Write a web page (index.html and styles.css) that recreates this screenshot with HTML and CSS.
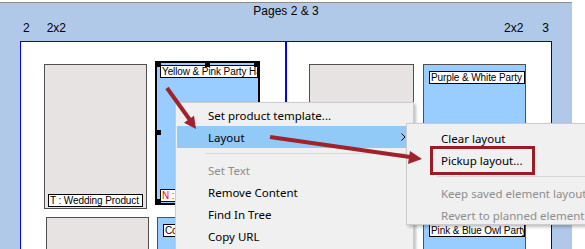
FILE: index.html
```html
<!DOCTYPE html>
<html>
<head>
    <title>Pages 2 &amp; 3</title>
    <link rel="stylesheet" href="styles.css">
</head>
<body>
    <div class="view">
        <div class="title">Pages 2 &amp; 3</div>
        <div class="info">
            <div class="info-side"><span>2</span><span>2x2</span></div>
            <div class="info-side info-side-right"><span>2x2</span><span>3</span></div>
        </div>
        <div class="spread">
            <div class="page page-left">
                <div class="row">
                    <div class="cell cell-empty">
                        <div class="tag">T : Wedding Product 1</div>
                    </div>
                    <div class="cell cell-filled cell-selected">
                        <div class="tag">Yellow &amp; Pink Party Hat</div>
                        <div class="tag tag-note">N : Note</div>
                        <span class="handle h-tl"></span>
                        <span class="handle h-tm"></span>
                        <span class="handle h-tr"></span>
                        <span class="handle h-ml"></span>
                        <span class="handle h-bl"></span>
                        <span class="handle h-bm"></span>
                        <span class="handle h-br"></span>
                    </div>
                </div>
                <div class="row row-shift">
                    <div class="cell cell-empty"></div>
                    <div class="cell cell-filled">
                        <div class="tag">Congratulations Banner</div>
                    </div>
                </div>
            </div>
            <div class="page page-right">
                <div class="row">
                    <div class="cell cell-empty cell-wide"></div>
                    <div class="cell cell-filled cell-narrow">
                        <div class="tag">Purple &amp; White Party Hat</div>
                    </div>
                </div>
                <div class="row">
                    <div class="cell cell-empty cell-wide"></div>
                    <div class="cell cell-filled cell-narrow">
                        <div class="tag">Pink &amp; Blue Owl Party</div>
                    </div>
                </div>
            </div>
        </div>
    </div>

    <div class="menu">
        <div class="menu-item">Set product template...</div>
        <div class="menu-item active">
            <span>Layout</span>
            <svg class="chevron" width="5" height="8" viewBox="0 0 5 8"><polyline points="0.5,0.5 4,4 0.5,7.5" fill="none" stroke="#000" stroke-width="1"/></svg>
        </div>
        <div class="menu-sep"></div>
        <div class="menu-item disabled">Set Text</div>
        <div class="menu-item">Remove Content</div>
        <div class="menu-item">Find In Tree</div>
        <div class="menu-item">Copy URL</div>
    </div>

    <div class="menu submenu">
        <div class="menu-item">Clear layout</div>
        <div class="menu-item">Pickup layout...</div>
        <div class="menu-sep"></div>
        <div class="menu-item disabled">Keep saved element layout</div>
        <div class="menu-item disabled">Revert to planned element layout</div>
    </div>

    <div class="callout"></div>

    <!-- annotation arrows -->
    <svg class="arrows" width="585" height="249" viewBox="0 0 585 249">
        <line x1="167" y1="88" x2="190" y2="120" stroke="#a0222b" stroke-width="4"/>
        <polygon points="196,129 184,122.7 194,115.7" fill="#a0222b"/>
        <line x1="270" y1="137" x2="410" y2="157" stroke="#a0222b" stroke-width="4"/>
        <polygon points="422,159 410,151 408,164" fill="#a0222b"/>
    </svg>
</body>
</html>
```

FILE: styles.css
```css
body {
    margin: 0;
    width: 585px;
    height: 249px;
    overflow: hidden;
    background: #fff;
    position: relative;
    font-family: "Noto Sans", sans-serif;
}
.view {
    width: 572px;
    height: 247px;
    margin-top: 2px;
    border-top: 1px solid #8c8c8c;
    background: #b1c9e9;
    overflow: hidden;
    font-family: "Liberation Sans", Arial, sans-serif;
    font-size: 12px;
    color: #000;
}
.title {
    text-align: center;
    line-height: 17px;
}
.info {
    display: flex;
    justify-content: space-between;
    line-height: 16px;
    padding: 0 23px 0 23px;
}
.info-side {
    display: flex;
    gap: 17px;
}
.info-side-right {
    gap: 19px;
}
.spread {
    display: flex;
    margin: 5px 0 0 20px;
}
.page {
    background: #fff;
    height: 220px;
    box-sizing: border-box;
    border-top: 1px solid #0000ff;
}
.page-left {
    width: 267px;
    border-left: 1px solid #0000ff;
    border-right: 2px solid #0000ff;
    padding: 22px 0 0 23px;
}
.page-right {
    width: 265px;
    border-top-color: #0000c0;
    border-right: 1px solid #0000b0;
    padding: 22px 0 0 22px;
}
.row {
    display: flex;
    align-items: flex-start;
    gap: 8px;
    margin-bottom: 8px;
}
.page-right .row {
    gap: 9px;
}
.row-shift {
    margin-left: 2px;
}
.cell {
    box-sizing: border-box;
    height: 145px;
    width: 103px;
    border: 1px solid #505050;
}
.cell-empty {
    background: #e6e3e2;
    display: flex;
    flex-direction: column;
    justify-content: flex-end;
    padding: 0 3px 1px 3px;
}
.cell-filled {
    width: 105px;
    background: #99ccff;
    padding: 6px 0 0 5px;
}
.cell-wide {
    width: 105px;
}
.cell-narrow {
    width: 103px;
}
.cell-selected {
    position: relative;
    margin-top: -3px;
    height: 144px;
    border: 2px solid #000;
    padding: 2px 0 0 3px;
    display: flex;
    flex-direction: column;
    justify-content: space-between;
}
.tag {
    box-sizing: border-box;
    height: 13px;
    background: #fff;
    border: 1px solid #000;
    padding: 0 1px;
    font-family: "Liberation Sans", Arial, sans-serif;
    font-size: 10px;
    letter-spacing: -0.1px;
    line-height: 11px;
    white-space: nowrap;
    overflow: hidden;
}
.tag-note {
    width: 40px;
    color: #ff0000;
    margin-bottom: 1px;
}
.handle {
    position: absolute;
    width: 5px;
    height: 5px;
    background: #000;
}
.h-tl { left: -1px; top: -1px; }
.h-tm { left: 48px; top: -1px; }
.h-tr { right: -1px; top: -1px; }
.h-ml { left: -1px; top: 67px; }
.h-bl { left: -1px; bottom: -1px; }
.h-bm { left: 48px; bottom: -1px; }
.h-br { right: -1px; bottom: -1px; }

.menu {
    position: absolute;
    left: 175px;
    top: 102px;
    width: 239px;
    height: 160px;
    box-sizing: border-box;
    background: #f0f0f0;
    border: 1px solid #cccccc;
    box-shadow: 2px 2px 3px rgba(0, 0, 0, 0.25);
    padding: 1px;
    font-size: 11.5px;
    color: #000;
}
.menu-item {
    display: flex;
    align-items: center;
    justify-content: space-between;
    height: 22px;
    padding: 0 6px 0 31px;
    white-space: nowrap;
}
.menu-item.active {
    background: #91c9f7;
}
.menu-item.disabled {
    color: #8d8d8d;
}
.menu-sep {
    height: 11px;
    display: flex;
    align-items: center;
    padding-left: 28px;
}
.menu-sep::after {
    content: "";
    flex: 1;
    height: 1px;
    background: #d7d7d7;
}
.submenu {
    left: 406px;
    top: 123px;
    width: 200px;
    height: 102px;
    padding: 3px 2px 0 2px;
    overflow: hidden;
}
.submenu .menu-item {
    padding-left: 32px;
}
.callout {
    position: absolute;
    left: 430px;
    top: 146px;
    width: 105px;
    height: 29px;
    box-sizing: border-box;
    border: 3px solid #9b1c24;
}
.arrows {
    position: absolute;
    left: 0;
    top: 0;
    pointer-events: none;
}
```
